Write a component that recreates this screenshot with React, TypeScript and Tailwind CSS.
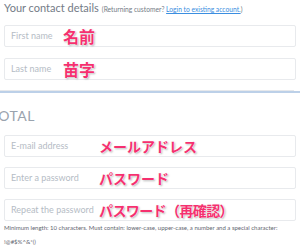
import React from "react";

const jp =
  "text-[#f5306f] font-bold leading-none [font-family:'Noto_Sans_CJK_JP',sans-serif] [text-shadow:0_0_1px_#fff,0_0_2px_#fff,1px_1px_2px_rgba(0,0,0,0.35)] absolute whitespace-nowrap";

function Field({
  ph,
  label,
  labelLeft,
  size,
}: {
  ph: string;
  label: string;
  labelLeft: string;
  size: string;
}) {
  return (
    <div className="relative h-[22px] border border-[#e8eaed] rounded-[2px] bg-white flex items-center pl-[6px]">
      <span className="text-[9px] text-[#b5bcc5]">{ph}</span>
      <span className={`${jp} ${labelLeft} ${size} top-1/2 -translate-y-1/2`}>{label}</span>
    </div>
  );
}

export default function App() {
  return (
    <div className="w-[300px] h-[249px] bg-white overflow-hidden relative [font-family:Lato,'Noto_Sans',sans-serif]">
      <div className="pl-[4px] pr-[4px] pt-[1px]">
        <div className="flex items-baseline gap-[3px] whitespace-nowrap leading-[14px]">
          <span className="text-[11px] text-[#737b86]">Your contact details</span>
          <span className="text-[6.7px] text-[#737b86]">
            (Returning customer?{" "}
            <span className="text-[#3b8ee0] underline">Login to existing account.</span>)
          </span>
        </div>
        <div className="mt-[9px] flex flex-col gap-[11px]">
          <Field ph="First name" label="名前" labelLeft="left-[58px]" size="text-[16px]" />
          <Field ph="Last name" label="苗字" labelLeft="left-[58px]" size="text-[16px]" />
        </div>
      </div>
      <div className="mt-[10px] h-[1px] bg-[#e6e8eb] mr-[6px]" />
      <div className="h-[2px] bg-[#bcd0e8]" />
      <div className="-ml-[10px] mt-[16px] text-[14px] text-[#9aa3ae] leading-none tracking-[0.5px]">TOTAL</div>
      <div className="px-[4px] mt-[12px] flex flex-col gap-[10px]">
        <Field ph="E-mail address" label="メールアドレス" labelLeft="left-[94px]" size="text-[14px]" />
        <Field ph="Enter a password" label="パスワード" labelLeft="left-[94px]" size="text-[14px]" />
        <Field ph="Repeat the password" label="パスワード（再確認）" labelLeft="left-[94px] tracking-[-0.6px]" size="text-[14px]" />
      </div>
      <div className="px-[4px] text-[6px] text-[#5f6670] leading-[14px]">
        <div className="whitespace-nowrap">
          Minimum length: 10 characters. Must contain: lower-case, upper-case, a number and a special character:
        </div>
        <div>!@#$%^&amp;*()</div>
      </div>
    </div>
  );
}
